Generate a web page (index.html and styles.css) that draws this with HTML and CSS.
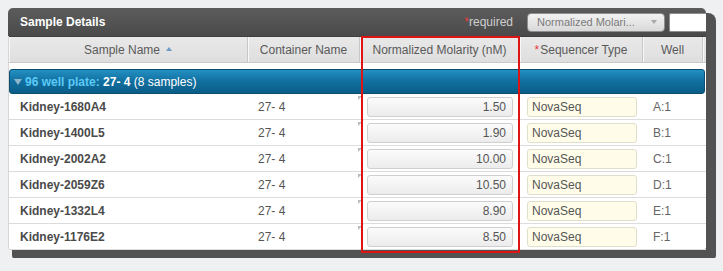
FILE: index.html
```html
<!DOCTYPE html>
<html>
<head>
<meta charset="utf-8">
<link rel="stylesheet" href="styles.css">
</head>
<body>
<div class="panel">
  <div class="titlebar">
    <span class="title">Sample Details</span>
    <span class="req"><span class="star">*</span>required</span>
    <div class="select"><span class="seltext">Normalized Molari...</span><span class="selarrow"></span></div>
    <div class="search"></div>
  </div>
  <div class="colhead">
    <div class="hc">Sample Name <span class="sort"></span></div>
    <div class="hc">Container Name</div>
    <div class="hc">Normalized Molarity (nM)</div>
    <div class="hc"><span class="star">*</span>Sequencer Type</div>
    <div class="hc">Well</div>
    <div class="hc last"></div>
  </div>
  <div class="gap"></div>
  <div class="group"><span class="caret"></span><span class="gtext"><span class="glabel">96 well plate:</span> <b>27- 4</b> (8 samples)</span></div>
  <div class="row">
    <div class="c name">Kidney-1680A4</div><div class="c cont">27- 4</div>
    <div class="c mol"><div class="num">1.50</div></div>
    <div class="c seq"><div class="seqin">NovaSeq</div></div>
    <div class="c well">A:1</div><div class="c"></div>
  </div>
  <div class="row">
    <div class="c name">Kidney-1400L5</div><div class="c cont">27- 4</div>
    <div class="c mol"><div class="num">1.90</div></div>
    <div class="c seq"><div class="seqin">NovaSeq</div></div>
    <div class="c well">B:1</div><div class="c"></div>
  </div>
  <div class="row">
    <div class="c name">Kidney-2002A2</div><div class="c cont">27- 4</div>
    <div class="c mol"><div class="num">10.00</div></div>
    <div class="c seq"><div class="seqin">NovaSeq</div></div>
    <div class="c well">C:1</div><div class="c"></div>
  </div>
  <div class="row">
    <div class="c name">Kidney-2059Z6</div><div class="c cont">27- 4</div>
    <div class="c mol"><div class="num">10.50</div></div>
    <div class="c seq"><div class="seqin">NovaSeq</div></div>
    <div class="c well">D:1</div><div class="c"></div>
  </div>
  <div class="row">
    <div class="c name">Kidney-1332L4</div><div class="c cont">27- 4</div>
    <div class="c mol"><div class="num">8.90</div></div>
    <div class="c seq"><div class="seqin">NovaSeq</div></div>
    <div class="c well">E:1</div><div class="c"></div>
  </div>
  <div class="row">
    <div class="c name">Kidney-1176E2</div><div class="c cont">27- 4</div>
    <div class="c mol"><div class="num">8.50</div></div>
    <div class="c seq"><div class="seqin">NovaSeq</div></div>
    <div class="c well">F:1</div><div class="c"></div>
  </div>
  <div class="highlight"></div>
</div>
</body>
</html>
```
FILE: styles.css
```css
* { box-sizing: border-box; }
html, body { margin: 0; }
body {
  background: #eef0f2;
  padding: 8px;
  font-family: "Liberation Sans", Arial, sans-serif;
  font-size: 12px;
  color: #555;
}
.panel {
  position: relative;
  width: 698px;
  background: #fff;
  border-radius: 5px 5px 3px 3px;
  border-left: 1px solid #d6d6d6;
  box-shadow: 7px 8px 0 3px #525252;
}
.titlebar {
  height: 28px;
  margin-left: -1px;
  display: flex;
  align-items: center;
  padding-left: 12px;
  background: linear-gradient(#5c5c5c, #4a4a4a);
  border-radius: 5px 5px 0 0;
  overflow: hidden;
}
.title { color: #fff; font-weight: bold; }
.req { margin-left: auto; color: #cfcfcf; }
.star { color: #e83a3a; }
.hc .star { margin-right: 1px; }
.select {
  margin-left: 14px;
  width: 138px;
  height: 19px;
  border: 1px solid #8e8e8e;
  border-radius: 4px;
  background: linear-gradient(#f2f2f2, #d9d9d9);
  display: flex;
  align-items: center;
  padding-left: 9px;
  font-size: 11px;
  color: #7a7a7a;
}
.seltext { flex: 1; }
.selarrow {
  width: 0; height: 0;
  margin-right: 7px;
  border-left: 3px solid transparent;
  border-right: 3px solid transparent;
  border-top: 4px solid #a8a8a8;
}
.search {
  margin-left: 4px;
  width: 37px;
  height: 19px;
  background: #fff;
  border: 1px solid #8e8e8e;
  border-right: none;
  border-radius: 2px 0 0 2px;
}
.colhead, .row {
  display: grid;
  grid-template-columns: 239px 112px 160px 123px 60px 3px;
}
.colhead {
  height: 27px;
  background: linear-gradient(#e9e9e9, #dedede);
  border-top: 1px solid #3f3f3f;
  border-bottom: 1px solid #c9c9c9;
}
.hc {
  display: flex;
  align-items: center;
  justify-content: center;
  color: #5a5a5a;
  border-right: 1px solid #c7c7c7;
  box-shadow: inset 1px 0 0 #f7f7f7;
  white-space: nowrap;
}
.hc.last { border-right: none; }
.sort {
  display: inline-block;
  margin-left: 6px;
  margin-top: -2px;
  width: 0; height: 0;
  border-left: 3px solid transparent;
  border-right: 3px solid transparent;
  border-bottom: 4px solid #6a9cc9;
}
.gap { height: 6px; }
.group {
  height: 25px;
  margin: 0 1px 0 0;
  display: flex;
  align-items: center;
  padding-left: 4px;
  background: linear-gradient(#2390c2, #116f9f 50%, #0a5d87);
  border: 1px solid #0a4d6f;
  border-radius: 3px;
  color: #fff;
  font-size: 12px;
}
.gtext { white-space: pre; }
.caret {
  width: 0; height: 0;
  margin: 1px 3px 0 0;
  border-left: 4px solid transparent;
  border-right: 4px solid transparent;
  border-top: 6px solid #8fb7cc;
}
.glabel { color: #5ccaf7; font-weight: bold; }
.group b { font-weight: bold; }
.row {
  height: 26px;
  border-bottom: 1px solid #dcdcdc;
}
.c {
  display: flex;
  align-items: center;
  white-space: nowrap;
  position: relative;
}
.name { padding-left: 11px; font-weight: bold; color: #4a4a4a; }
.cont { padding-left: 10px; color: #555; }
.mol { padding: 0 7px 0 7px; }
.mol::before {
  content: "";
  position: absolute;
  left: -2px;
  top: 2px;
  border-top: 4px solid #b9b9b9;
  border-right: 4px solid transparent;
}
.num {
  width: 100%;
  height: 20px;
  border: 1px solid #cfcfcf;
  border-radius: 3px;
  background: linear-gradient(#fbfbfb, #ececec);
  text-align: right;
  line-height: 18px;
  padding-right: 6px;
  color: #555;
}
.seq { padding: 0 6px 0 7px; }
.seqin {
  width: 100%;
  height: 20px;
  border: 1px solid #e0dfcc;
  border-radius: 3px;
  background: #fffdea;
  line-height: 18px;
  padding-left: 4px;
  color: #555;
}
.well { padding-left: 10px; color: #666; }
.highlight {
  position: absolute;
  left: 352px;
  top: 28px;
  width: 159px;
  height: 217px;
  border: 2px solid #dd1414;
  pointer-events: none;
}
```
